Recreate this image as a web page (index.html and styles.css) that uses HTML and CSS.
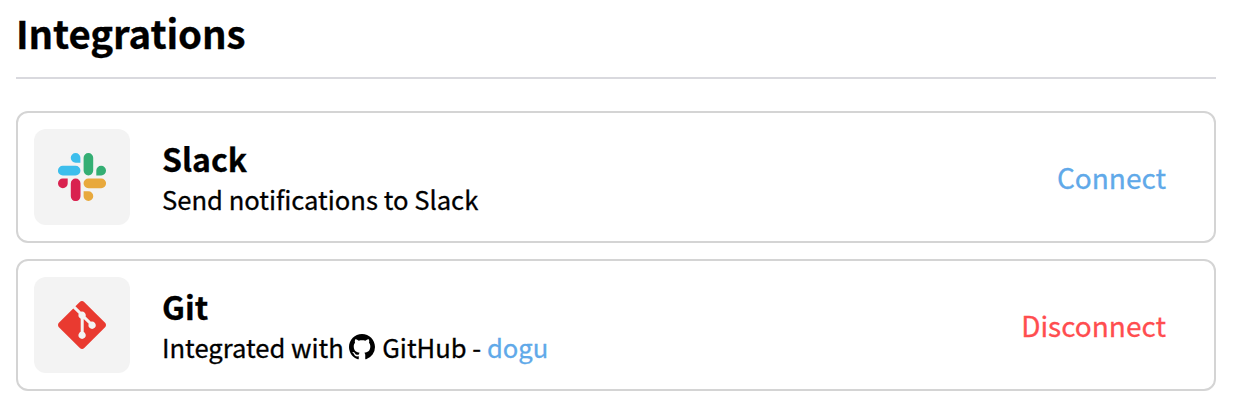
FILE: index.html
```html
<!DOCTYPE html>
<html lang="en">
<head>
<meta charset="utf-8">
<title>Integrations</title>
<link rel="stylesheet" href="styles.css">
</head>
<body>
<main class="page">
  <h1 class="page-title">Integrations</h1>
  <section class="list">
    <article class="card">
      <div class="logo">
        <svg width="48" height="48" viewBox="0 0 48 48">
          <path fill="#3dbeec" d="M17.6 0a4.8 4.8 0 1 0 0 9.7h4.8V4.8A4.8 4.8 0 0 0 17.6 0zm0 12.8H4.8a4.85 4.85 0 0 0 0 9.7h12.8a4.85 4.85 0 0 0 0-9.7z"/>
          <path fill="#34ae73" d="M48 17.6a4.8 4.8 0 0 0-9.7 0v4.9h4.9a4.85 4.85 0 0 0 4.8-4.9zm-12.8 0V4.8a4.8 4.8 0 0 0-9.6 0v12.8a4.8 4.8 0 0 0 9.6 0z"/>
          <path fill="#e8a93d" d="M30.4 48a4.85 4.85 0 0 0 0-9.7h-4.8v4.9a4.85 4.85 0 0 0 4.8 4.8zm0-12.8h12.8a4.8 4.8 0 0 0 0-9.7H30.4a4.85 4.85 0 0 0 0 9.7z"/>
          <path fill="#d9224f" d="M0 30.4a4.8 4.8 0 0 0 9.7 0v-4.9H4.8A4.85 4.85 0 0 0 0 30.4zm12.8 0v12.8a4.8 4.8 0 0 0 9.7 0V30.4a4.85 4.85 0 0 0-9.7 0z"/>
        </svg>
      </div>
      <div class="info">
        <h2 class="name">Slack</h2>
        <p class="desc">Send notifications to Slack</p>
      </div>
      <a class="action connect">Connect</a>
    </article>
    <article class="card">
      <div class="logo">
        <svg width="48" height="48" viewBox="0 0 24 24">
          <path fill="#e93a30" d="M23.546 10.93L13.067.452c-.604-.603-1.582-.603-2.188 0L8.708 2.627l2.76 2.76c.645-.215 1.379-.07 1.889.441.516.515.658 1.258.438 1.9l2.658 2.66c.645-.223 1.387-.078 1.9.435.721.72.721 1.884 0 2.604-.719.719-1.881.719-2.6 0-.539-.541-.674-1.337-.404-1.996L12.86 8.955v6.525c.176.086.342.203.488.348.713.721.713 1.883 0 2.6-.719.721-1.889.721-2.609 0-.719-.719-.719-1.879 0-2.598.182-.18.387-.316.605-.406V8.835c-.217-.091-.424-.222-.6-.401-.545-.545-.676-1.342-.396-2.009L7.636 3.7.45 10.881c-.6.605-.6 1.584 0 2.189l10.48 10.477c.604.604 1.582.604 2.186 0l10.43-10.43c.605-.603.605-1.582 0-2.187"/>
        </svg>
      </div>
      <div class="info">
        <h2 class="name">Git</h2>
        <p class="desc">Integrated with <svg class="github" width="26" height="26" viewBox="0 0 16 16"><path d="M8 0C3.58 0 0 3.58 0 8c0 3.54 2.29 6.53 5.47 7.59.4.07.55-.17.55-.38 0-.19-.01-.82-.01-1.49-2.01.37-2.53-.49-2.69-.94-.09-.23-.48-.94-.82-1.13-.28-.15-.68-.52-.01-.53.63-.01 1.08.58 1.23.82.72 1.21 1.87.87 2.33.66.07-.52.28-.87.51-1.07-1.78-.2-3.64-.89-3.64-3.95 0-.87.31-1.59.82-2.15-.08-.2-.36-1.02.08-2.12 0 0 .67-.21 2.2.82.64-.18 1.32-.27 2-.27s1.36.09 2 .27c1.53-1.04 2.2-.82 2.2-.82.44 1.1.16 1.92.08 2.12.51.56.82 1.27.82 2.15 0 3.07-1.87 3.75-3.65 3.95.29.25.54.73.54 1.48 0 1.07-.01 1.93-.01 2.2 0 .21.15.46.55.38A8.01 8.01 0 0 0 16 8c0-4.42-3.58-8-8-8z"/></svg> GitHub - <a class="account">dogu</a></p>
      </div>
      <a class="action disconnect">Disconnect</a>
    </article>
  </section>
</main>
</body>
</html>
```
FILE: styles.css
```css
* { box-sizing: border-box; }
body {
  margin: 0;
  background: #fff;
  color: #000;
  font-family: "Noto Sans CJK KR", "Noto Sans", sans-serif;
  -webkit-text-stroke: 0.3px currentColor;
}
.page { padding: 0 18px 0 16px; }
.page-title {
  margin: 0;
  height: 79px;
  padding-top: 2px;
  border-bottom: 2px solid #d9d9de;
  font-size: 38.4px;
  font-weight: 700;
  line-height: 60px;
  letter-spacing: -0.08px;
}
.list {
  display: flex;
  flex-direction: column;
  gap: 16px;
  margin-top: 32px;
}
.card {
  display: flex;
  align-items: center;
  height: 132px;
  padding: 0 48px 0 16px;
  border: 2px solid #d4d4d4;
  border-radius: 12px;
}
.logo {
  display: flex;
  align-items: center;
  justify-content: center;
  width: 96px;
  height: 96px;
  border-radius: 12px;
  background: #f3f3f3;
}
.info { flex: 1; margin-left: 32px; padding-top: 1px; }
.name {
  margin: 0 0 1px;
  font-size: 32px;
  font-weight: 700;
  line-height: 42px;
}
.desc {
  margin: 0;
  font-size: 25.6px;
  line-height: 38px;
  white-space: nowrap;
}
.github { margin: 0 2px 0 -1px; vertical-align: -2px; -webkit-text-stroke: 0; }
.account, .connect { color: #60a9e9; -webkit-text-stroke-color: #60a9e9; }
.action { font-size: 28px; line-height: 40px; }
.disconnect { color: #ff4d4f; -webkit-text-stroke-color: #ff4d4f; }
```
